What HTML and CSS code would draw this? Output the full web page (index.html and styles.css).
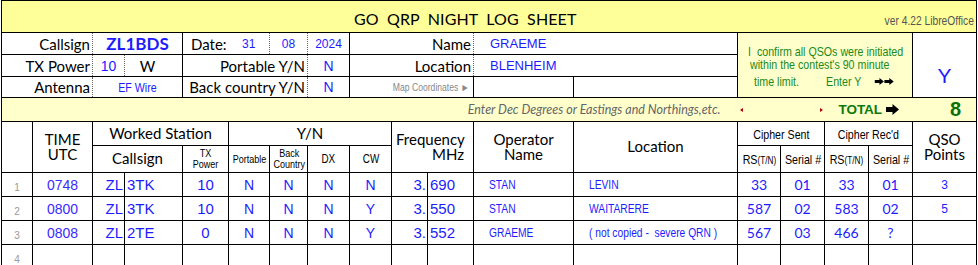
FILE: index.html
```html
<!DOCTYPE html>
<html>
<head>
<meta charset="utf-8">
<title>GO QRP Night Log Sheet</title>
<link rel="stylesheet" href="styles.css">
</head>
<body>
<table class="sheet">
  <colgroup>
    <col class="w31"><col class="w60"><col class="w32"><col class="w58"><col class="w46"><col class="w41"><col class="w38"><col class="w42"><col class="w42"><col class="w36"><col class="w46"><col class="w100"><col class="w164"><col class="w43"><col class="w44"><col class="w44"><col class="w44"><col class="w64">
  </colgroup>
  <tbody>
    <tr class="r-title">
      <td colspan="18" class="title">
        <div class="title-bar">
          <span class="title-text">GO&nbsp; QRP&nbsp; NIGHT&nbsp; LOG&nbsp; SHEET</span>
          <span class="version nar nar-r">ver 4.22 LibreOffice</span>
        </div>
      </td>
    </tr>
    <tr class="r-i1">
      <td colspan="2" class="lbl dr">Callsign</td>
      <td colspan="2" class="callsign dl">ZL1BDS</td>
      <td class="lbl-l nr">Date:</td>
      <td class="val-sm nl dr">31</td>
      <td class="val-sm dl dr">08</td>
      <td class="val-sm dl">2024</td>
      <td colspan="3" class="lbl dr">Name</td>
      <td colspan="2" class="val-txt dl">GRAEME</td>
      <td colspan="4" rowspan="3" class="confirm">
        <div class="cf-l1"><span class="nar nar-l">I&nbsp; confirm all QSOs were initiated</span></div>
        <div class="cf-l2"><span class="nar nar-l">within the contest's 90 minute</span></div>
        <div class="cf-l3"><span class="nar nar-l">time limit.<span class="cf-enter">Enter Y</span><svg class="cf-arrows" width="24" height="7" viewBox="0 0 20 7" preserveAspectRatio="none"><path d="M0 2h5V0l4.5 3.5L5 7V5H0z M10 2h5V0l4.5 3.5L15 7V5h-5z" fill="#000"/></svg></span></div>
      </td>
      <td rowspan="3" class="confirm-y">Y</td>
    </tr>
    <tr class="r-i2">
      <td colspan="2" class="lbl dr">TX Power</td>
      <td class="val dl dr">10</td>
      <td class="unit dl">W</td>
      <td colspan="3" class="lbl dr">Portable Y/N</td>
      <td class="val dl">N</td>
      <td colspan="3" class="lbl dr">Location</td>
      <td colspan="2" class="val-txt dl">BLENHEIM</td>
    </tr>
    <tr class="r-i3">
      <td colspan="2" class="lbl dr">Antenna</td>
      <td colspan="2" class="val-narrow dl"><span class="nar">EF Wire</span></td>
      <td colspan="3" class="lbl dr">Back country Y/N</td>
      <td class="val dl">N</td>
      <td colspan="3" class="mapc"><span class="nar nar-r">Map Coordinates ►</span></td>
      <td></td>
      <td></td>
    </tr>
    <tr class="r-band">
      <td colspan="13" class="band-note">Enter Dec Degrees or Eastings and Northings,etc.</td>
      <td colspan="2" class="band-arrows"><div class="tri-row"><span class="tri-l"></span><span class="tri-r"></span></div></td>
      <td colspan="2" class="total">TOTAL <svg class="total-arrow" width="13" height="11" viewBox="0 0 13 11"><path d="M0 3h6.5V0L13 5.5 6.5 11V8H0z" fill="#000"/></svg></td>
      <td class="total-val">8</td>
    </tr>
    <tr class="r-h1">
      <td rowspan="2"></td>
      <td rowspan="2" class="h">TIME<br>UTC</td>
      <td colspan="3" class="h">Worked Station</td>
      <td colspan="4" class="h">Y/N</td>
      <td colspan="2" rowspan="2" class="h freq"><div class="fq1">Frequency</div><div class="fq2">MHz</div></td>
      <td rowspan="2" class="h">Operator<br>Name</td>
      <td rowspan="2" class="h">Location</td>
      <td colspan="2" class="hn"><span class="nar">Cipher Sent</span></td>
      <td colspan="2" class="hn"><span class="nar">Cipher Rec'd</span></td>
      <td rowspan="2" class="h">QSO<br>Points</td>
    </tr>
    <tr class="r-h2">
      <td colspan="2" class="h">Callsign</td>
      <td class="hs"><span class="nar">TX<br>Power</span></td>
      <td class="hs"><span class="nar">Portable</span></td>
      <td class="hs"><span class="nar">Back<br>Country</span></td>
      <td class="hs hs-dx"><span class="nar">DX</span></td>
      <td class="hs hs-dx"><span class="nar">CW</span></td>
      <td class="hn"><span class="nar">RS<span class="tn">(T/N)</span></span></td>
      <td class="hn"><span class="nar">Serial #</span></td>
      <td class="hn"><span class="nar">RS<span class="tn">(T/N)</span></span></td>
      <td class="hn"><span class="nar">Serial #</span></td>
    </tr>
    <tr class="r-d">
      <td class="rn">1</td>
      <td class="d time">0748</td>
      <td class="d zl">ZL</td>
      <td class="d cs">3TK</td>
      <td class="d">10</td>
      <td class="d yn">N</td>
      <td class="d yn">N</td>
      <td class="d yn">N</td>
      <td class="d yn">N</td>
      <td class="d mhz">3.</td>
      <td class="d khz">690</td>
      <td class="d op"><span class="nar nar-l">STAN</span></td>
      <td class="d op"><span class="nar nar-l">LEVIN</span></td>
      <td class="d cip">33</td>
      <td class="d cip">01</td>
      <td class="d cip">33</td>
      <td class="d cip">01</td>
      <td class="d pts">3</td>
    </tr>
    <tr class="r-d">
      <td class="rn">2</td>
      <td class="d time">0800</td>
      <td class="d zl">ZL</td>
      <td class="d cs">3TK</td>
      <td class="d">10</td>
      <td class="d yn">N</td>
      <td class="d yn">N</td>
      <td class="d yn">N</td>
      <td class="d yn">Y</td>
      <td class="d mhz">3.</td>
      <td class="d khz">550</td>
      <td class="d op"><span class="nar nar-l">STAN</span></td>
      <td class="d op"><span class="nar nar-l">WAITARERE</span></td>
      <td class="d cip">587</td>
      <td class="d cip">02</td>
      <td class="d cip">583</td>
      <td class="d cip">02</td>
      <td class="d pts">5</td>
    </tr>
    <tr class="r-d">
      <td class="rn">3</td>
      <td class="d time">0808</td>
      <td class="d zl">ZL</td>
      <td class="d cs">2TE</td>
      <td class="d">0</td>
      <td class="d yn">N</td>
      <td class="d yn">N</td>
      <td class="d yn">N</td>
      <td class="d yn">Y</td>
      <td class="d mhz">3.</td>
      <td class="d khz">552</td>
      <td class="d op"><span class="nar nar-l">GRAEME</span></td>
      <td class="d op"><span class="nar nar-l">( not copied -&nbsp; severe QRN )</span></td>
      <td class="d cip">567</td>
      <td class="d cip">03</td>
      <td class="d cip">466</td>
      <td class="d cip">?</td>
      <td class="d pts"></td>
    </tr>
    <tr class="r-last">
      <td class="rn">4</td>
      <td></td><td></td><td></td><td></td><td></td><td></td><td></td><td></td><td></td><td></td><td></td><td></td><td></td><td></td><td></td><td></td><td></td>
    </tr>
  </tbody>
</table>
</body>
</html>
```
FILE: styles.css
```css
html, body {
  margin: 0;
  padding: 0;
  background: #fff;
}

body {
  font-family: Lato, "Liberation Sans", sans-serif;
  color: #000;
}

.sheet {
  border-collapse: collapse;
  table-layout: fixed;
  width: 976px;
  margin-left: 1px;
  border: 1px solid #222;
}

.sheet td {
  border: 1px solid #000;
  padding: 0;
  overflow: hidden;
  white-space: nowrap;
  vertical-align: middle;
  text-align: center;
}

/* Arial-Narrow look: Liberation Sans compressed horizontally */
.nar {
  display: inline-block;
  font-family: "Liberation Sans", sans-serif;
  transform: scaleX(0.82);
  transform-origin: center center;
  white-space: nowrap;
}

.nar-l { transform-origin: left center; }
.nar-r { transform-origin: right center; }

.w31 { width: 31px; }
.w60 { width: 60px; }
.w32 { width: 32px; }
.w58 { width: 58px; }
.w46 { width: 46px; }
.w41 { width: 41px; }
.w38 { width: 38px; }
.w42 { width: 42px; }
.w36 { width: 36px; }
.w100 { width: 100px; }
.w164 { width: 164px; }
.w43 { width: 43px; }
.w44 { width: 44px; }
.w64 { width: 64px; }

/* row heights */
.r-title { height: 32px; }
.r-i1 { height: 21px; }
.r-i2 { height: 22px; }
.r-i3 { height: 21px; }
.r-band { height: 23px; }
.r-h1 { height: 24px; }
.r-h2 { height: 27px; }
.r-d { height: 24px; }
.r-last { height: 24px; }

/* border variants */
.sheet td.dr { border-right: 1px dotted #666; }
.sheet td.dl { border-left: 1px dotted #666; }
.sheet td.nr { border-right-style: hidden; }
.sheet td.nl { border-left-style: hidden; }

/* title */
.sheet td.title {
  background: #ffff99;
  text-align: left;
}

.title-bar {
  display: flex;
  align-items: baseline;
  padding-top: 3px;
}

.title-text {
  margin-left: 352px;
  font-size: 16px;
  letter-spacing: 0.1px;
}

.version {
  margin-left: auto;
  margin-right: 2px;
  font-size: 12.5px;
  color: #555;
}

/* info section */
.sheet td.lbl {
  text-align: right;
  padding-right: 2px;
  font-size: 15px;
}

.sheet td.lbl-l {
  text-align: left;
  padding-left: 8px;
  font-size: 15px;
}

.sheet td.callsign {
  font-weight: 700;
  font-size: 17px;
  color: #1c1cff;
}

.sheet td.val-sm {
  font-family: "Liberation Sans", sans-serif;
  font-size: 12px;
  color: #1c1cff;
}

.sheet td.val {
  font-family: "Liberation Sans", sans-serif;
  font-size: 14px;
  color: #1c1cff;
}

.sheet td.unit {
  font-size: 15px;
  padding-right: 12px;
}

.sheet td.val-txt {
  text-align: left;
  padding-left: 16px;
  font-family: "Liberation Sans", sans-serif;
  font-size: 13px;
  color: #1c1cff;
}

.sheet td.val-narrow {
  font-size: 13px;
  color: #1c1cff;
}

.sheet td.mapc {
  text-align: right;
  padding-right: 4px;
  font-size: 10.5px;
  color: #888;
}

.sheet td.confirm {
  background: #ffffcc;
  vertical-align: top;
  text-align: left;
  padding-top: 12px;
  font-size: 13px;
  line-height: 13px;
  color: #1a8a1a;
}

.cf-l1 { padding-left: 10px; }
.cf-l2 { padding-left: 12px; }
.cf-l3 {
  padding-left: 16px;
  margin-top: 4px;
}

.cf-enter { margin-left: 33px; }
.cf-arrows { margin-left: 16px; vertical-align: 1px; }

.sheet td.confirm-y {
  vertical-align: top;
  padding-top: 32px;
  font-family: "Liberation Sans", sans-serif;
  font-size: 21px;
  line-height: 21px;
  color: #1c1cff;
}

/* band row */
.sheet td.band-note,
.sheet td.band-arrows,
.sheet td.total,
.sheet td.total-val {
  background: #ffffcc;
}

.sheet td.band-note {
  border-right-style: hidden;
  text-align: right;
  padding-right: 17px;
  font-style: italic;
  font-size: 12.5px;
  color: #666;
}

.sheet td.band-arrows {
  border-right-style: hidden;
}

.tri-row {
  display: flex;
  justify-content: space-between;
  align-items: center;
  padding: 0 2px;
}

.tri-l {
  width: 0;
  height: 0;
  border-top: 2.5px solid transparent;
  border-bottom: 2.5px solid transparent;
  border-right: 3px solid #b00000;
}

.tri-r {
  width: 0;
  height: 0;
  border-top: 2.5px solid transparent;
  border-bottom: 2.5px solid transparent;
  border-left: 3px solid #b00000;
}

.sheet td.total {
  border-right-style: hidden;
  font-family: "Liberation Sans", sans-serif;
  font-weight: 700;
  font-size: 13.5px;
  color: #0a7a0a;
}

.total-arrow {
  vertical-align: -1px;
}

.sheet td.total-val {
  text-align: right;
  padding-right: 15px;
  font-family: "Liberation Sans", sans-serif;
  font-weight: 700;
  font-size: 20px;
  color: #0a700a;
}

/* headers */
.sheet td.h {
  font-size: 15px;
  line-height: 15.5px;
}

.sheet td.hs {
  font-size: 11px;
  line-height: 11px;
}

.sheet td.hs-dx {
  font-size: 12px;
}

.sheet td.hn {
  font-size: 13px;
}

.tn { font-size: 10px; }

.fq1 {
  text-align: left;
  padding-left: 4px;
}

.fq2 {
  text-align: right;
  padding-right: 9px;
}

/* data */
.sheet td.rn {
  vertical-align: bottom;
  padding-bottom: 3px;
  font-family: "Liberation Sans", sans-serif;
  font-size: 10px;
  color: #999;
}

.sheet td.d {
  font-family: "Liberation Sans", sans-serif;
  font-size: 15px;
  color: #1c1cff;
}

.sheet td.time { font-size: 14px; color: #3a2aff; }
.sheet td.yn { font-size: 14px; }

.sheet td.zl {
  text-align: right;
  padding-right: 1px;
}

.sheet td.cs {
  text-align: left;
  padding-left: 2px;
}

.sheet td.mhz {
  text-align: right;
  padding-right: 1px;
}

.sheet td.khz {
  text-align: left;
  padding-left: 2px;
}

.sheet td.op {
  text-align: left;
  padding-left: 15px;
  font-size: 12.5px;
}

.sheet td.cip {
  font-family: Lato, sans-serif;
  font-size: 14px;
}

.sheet td.pts { font-size: 12px; }
```
